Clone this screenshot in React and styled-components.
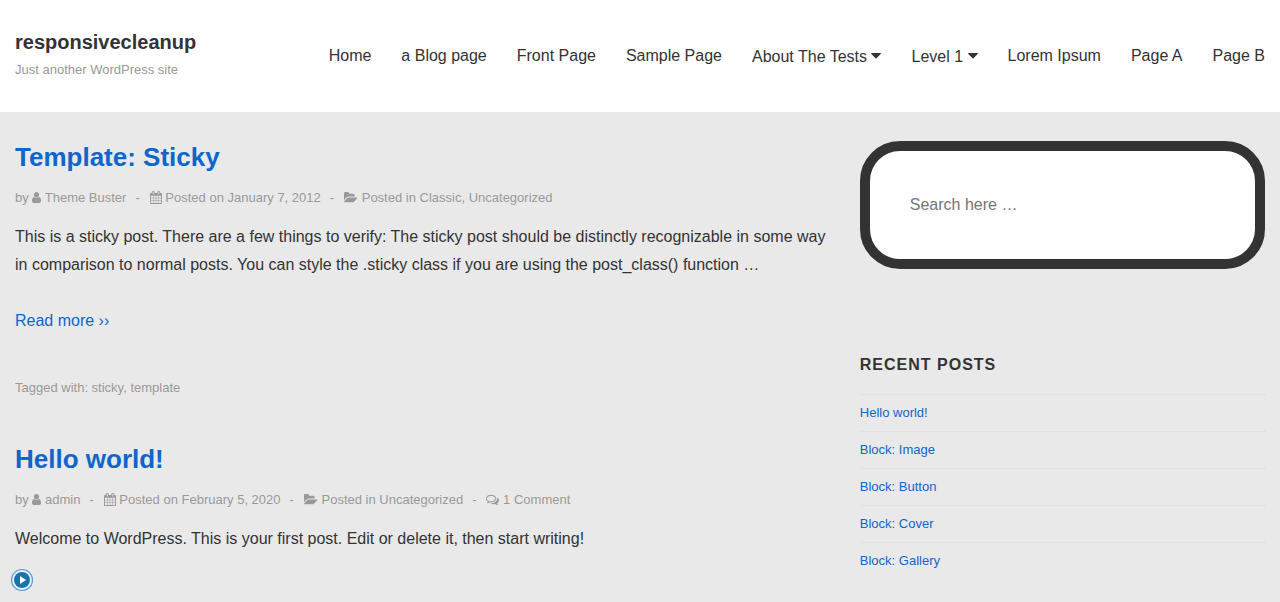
import React from 'react';
import styled, { createGlobalStyle } from 'styled-components';

const GlobalStyle = createGlobalStyle`
  *, *::before, *::after { box-sizing: border-box; }
  body {
    margin: 0;
    min-height: 100vh;
    background: #e9e9e9;
    color: #333;
    font: 16px/28px "Liberation Sans", Arial, sans-serif;
  }
  a { color: inherit; text-decoration: none; }
`;

const Header = styled.header`
  display: flex;
  justify-content: space-between;
  align-items: flex-start;
  padding: 28px 15px;
  min-height: 112px;
  background: #fff;
`;

const SiteTitle = styled.h1`
  margin: 0;
  font-size: 20px;
  line-height: 28px;
`;

const Tagline = styled.p`
  margin: 0;
  font-size: 13px;
  line-height: 28px;
  color: #999;
`;

const NavList = styled.ul`
  display: flex;
  gap: 30px;
  margin: 0;
  padding: 14px 0 0;
  list-style: none;
  white-space: nowrap;
`;

const NavItem = styled.li`
  padding-top: ${(p) => (p.$menu ? '1px' : '0')};
`;

const Glyph = styled.svg`
  height: ${(p) => p.$size}px;
  width: ${(p) => p.$width}px;
  vertical-align: -2px;
  fill: currentColor;
`;

const Columns = styled.div`
  display: grid;
  grid-template-columns: 66fr 34fr;
`;

const Posts = styled.main`
  padding: 27px 15px 0;
`;

const Post = styled.article`
  margin-bottom: 40px;
`;

const PostTitle = styled.h2`
  margin: 0 0 10px;
  font-size: 26px;
  line-height: 36px;
  color: #0e66cc;
`;

const Meta = styled.div`
  font-size: 13px;
  line-height: 26px;
  color: #999;
`;

const MetaItem = styled.span`
  & + &::before {
    content: "-";
    margin: 0 10px 0 9px;
  }
`;

const Text = styled.p`
  margin: 12px 0 28px;
`;

const ReadMore = styled.a`
  display: block;
  margin-bottom: 40px;
  color: #0e66cc;
`;

const Sidebar = styled.aside`
  padding: 29px 15px 0;
`;

const SearchInput = styled.input`
  display: block;
  width: 100%;
  height: 128px;
  padding: 40px;
  border: 10px solid #333;
  border-radius: 40px;
  background: #fff;
  color: #333;
  font: inherit;
  outline: none;
  &::placeholder { color: #757575; }
`;

const WidgetTitle = styled.h3`
  margin: 82px 0 15px;
  font-size: 16px;
  line-height: 28px;
  letter-spacing: 1px;
  text-transform: uppercase;
`;

const RecentList = styled.ul`
  margin: 0;
  padding: 0;
  list-style: none;
  font-size: 13px;
  line-height: 26px;
  color: #0e66cc;
`;

const RecentItem = styled.li`
  padding: 5px 0;
  border-top: 1px dotted #d8d8d8;
`;

const PlayButton = styled.button`
  position: fixed;
  left: 10px;
  bottom: 10px;
  width: 24px;
  height: 24px;
  padding: 0;
  border: 0;
  border-radius: 50%;
  background: none;
  svg { display: block; }
`;

const ICONS = {
  caret: {
    box: '0 0 1024 1792', w: 10,
    d: 'M1024 704q0 26-19 45l-448 448q-19 19-45 19t-45-19l-448-448q-19-19-19-45t19-45 45-19h896q26 0 45 19t19 45z',
  },
  user: {
    box: '256 0 1280 1792', w: 9,
    d: 'M1536 1399q0 109-62.5 187t-150.5 78h-854q-88 0-150.5-78t-62.5-187q0-85 8.5-160.5t31.5-152 58.5-131 94-89 134.5-34.5q131 128 313 128t313-128q76 0 134.5 34.5t94 89 58.5 131 31.5 152 8.5 160.5zm-256-887q0 159-112.5 271.5t-271.5 112.5-271.5-112.5-112.5-271.5 112.5-271.5 271.5-112.5 271.5 112.5 112.5 271.5z',
  },
  calendar: {
    box: '64 0 1664 1792', w: 12,
    d: 'M192 1664h288v-288h-288v288zm352 0h320v-288h-320v288zm-352-352h288v-320h-288v320zm352 0h320v-320h-320v320zm-352-384h288v-288h-288v288zm736 736h320v-288h-320v288zm-384-736h320v-288h-320v288zm768 736h288v-288h-288v288zm-384-352h320v-320h-320v320zm-352-864v-288q0-13-9.5-22.5t-22.5-9.5h-64q-13 0-22.5 9.5t-9.5 22.5v288q0 13 9.5 22.5t22.5 9.5h64q13 0 22.5-9.5t9.5-22.5zm736 864h288v-320h-288v320zm-384-384h320v-288h-320v288zm384 0h288v-288h-288v288zm32-480v-288q0-13-9.5-22.5t-22.5-9.5h-64q-13 0-22.5 9.5t-9.5 22.5v288q0 13 9.5 22.5t22.5 9.5h64q13 0 22.5-9.5t9.5-22.5zm384-64v1280q0 52-38 90t-90 38h-1408q-52 0-90-38t-38-90v-1280q0-52 38-90t90-38h128v-96q0-66 47-113t113-47h64q66 0 113 47t47 113v96h384v-96q0-66 47-113t113-47h64q66 0 113 47t47 113v96h128q52 0 90 38t38 90z',
  },
  folder: {
    box: '0 0 1920 1792', w: 14,
    d: 'M1815 952q0 31-31 66l-336 396q-43 51-120.5 86.5t-143.5 35.5h-1088q-34 0-60.5-13t-26.5-43q0-31 31-66l336-396q43-51 120.5-86.5t143.5-35.5h1088q34 0 60.5 13t26.5 43zm-343-344v160h-832q-94 0-197 47.5t-164 119.5l-337 396-5 6q0-4-.5-12.5t-.5-12.5v-960q0-92 66-158t158-66h320q92 0 158 66t66 158v32h544q92 0 158 66t66 158z',
  },
  comments: {
    box: '0 0 1792 1792', w: 13,
    d: 'M704 384q-153 0-286 52t-211.5 141-78.5 191q0 82 53 158t149 132l97 56-35 84q34-20 62-39l44-31 53 10q78 14 153 14 153 0 286-52t211.5-141 78.5-191-78.5-191-211.5-141-286-52zm0-128q191 0 353.5 68.5t256.5 186.5 94 257-94 257-256.5 186.5-353.5 68.5q-86 0-176-16-124 88-278 128-36 9-86 16h-3q-11 0-20.5-8t-11.5-21q-1-3-1-6.5t.5-6.5 2-6l2.5-5 3.5-5.5 4-5 4.5-5 4-4.5q5-6 23-25t26-29.5 22.5-29 25-38.5 20.5-44q-124-72-195-177t-71-224q0-139 94-257t256.5-186.5 353.5-68.5zm822 1169q10 24 20.5 44t25 38.5 22.5 29 26 29.5 23 25q1 1 4 4.5t4.5 5 4 5 3.5 5.5l2.5 5 2 6 .5 6.5-1 6.5q-3 14-13 22t-22 7q-50-7-86-16-154-40-278-128-90 16-176 16-271 0-472-132 58 4 88 4 161 0 309-45t264-129q125-92 192-212t67-254q0-77-23-152 129 71 204 178t75 230q0 120-71 224.5t-195 176.5z',
  },
};

function Icon({ name, size = 13 }) {
  const { box, w, d } = ICONS[name];
  return (
    <Glyph viewBox={box} $size={size} $width={w} aria-hidden="true">
      <path d={d} />
    </Glyph>
  );
}

const NAV = [
  { label: 'Home' },
  { label: 'a Blog page' },
  { label: 'Front Page' },
  { label: 'Sample Page' },
  { label: 'About The Tests', menu: true },
  { label: 'Level 1', menu: true },
  { label: 'Lorem Ipsum' },
  { label: 'Page A' },
  { label: 'Page B' },
];

const RECENT = ['Hello world!', 'Block: Image', 'Block: Button', 'Block: Cover', 'Block: Gallery'];

export default function App() {
  return (
    <>
      <GlobalStyle />
      <Header>
        <div>
          <SiteTitle><a href="#home">responsivecleanup</a></SiteTitle>
          <Tagline>Just another WordPress site</Tagline>
        </div>
        <nav aria-label="Main">
          <NavList>
            {NAV.map(({ label, menu }) => (
              <NavItem key={label} $menu={menu}>
                <a href="#page">
                  {label}
                  {menu && <> <Icon name="caret" size={17} /></>}
                </a>
              </NavItem>
            ))}
          </NavList>
        </nav>
      </Header>
      <Columns>
        <Posts>
          <Post>
            <PostTitle><a href="#sticky">Template: Sticky</a></PostTitle>
            <Meta>
              <MetaItem>by <Icon name="user" /> <a href="#author">Theme Buster</a></MetaItem>
              <MetaItem><Icon name="calendar" /> Posted on <a href="#date">January 7, 2012</a></MetaItem>
              <MetaItem>
                <Icon name="folder" /> Posted in <a href="#classic">Classic</a>, <a href="#uncategorized">Uncategorized</a>
              </MetaItem>
            </Meta>
            <Text>
              This is a sticky post. There are a few things to verify: The sticky post should be distinctly
              recognizable in some way in comparison to normal posts. You can style the .sticky class if you
              are using the post_class() function …
            </Text>
            <ReadMore href="#sticky">Read more ››</ReadMore>
            <Meta>Tagged with: <a href="#tag-sticky">sticky</a>, <a href="#tag-template">template</a></Meta>
          </Post>
          <Post>
            <PostTitle><a href="#hello">Hello world!</a></PostTitle>
            <Meta>
              <MetaItem>by <Icon name="user" /> <a href="#author">admin</a></MetaItem>
              <MetaItem><Icon name="calendar" /> Posted on <a href="#date">February 5, 2020</a></MetaItem>
              <MetaItem><Icon name="folder" /> Posted in <a href="#uncategorized">Uncategorized</a></MetaItem>
              <MetaItem><Icon name="comments" /> <a href="#comments">1 Comment</a></MetaItem>
            </Meta>
            <Text>Welcome to WordPress. This is your first post. Edit or delete it, then start writing!</Text>
          </Post>
        </Posts>
        <Sidebar>
          <form role="search">
            <SearchInput type="search" aria-label="Search" placeholder="Search here …" />
          </form>
          <WidgetTitle>Recent Posts</WidgetTitle>
          <RecentList>
            {RECENT.map((title) => (
              <RecentItem key={title}><a href="#post">{title}</a></RecentItem>
            ))}
          </RecentList>
        </Sidebar>
      </Columns>
      <PlayButton type="button" aria-label="Play">
        <svg width="24" height="24" viewBox="0 0 24 24" aria-hidden="true">
          <circle cx="12" cy="12" r="10.5" fill="#f0f1f2" stroke="#5b9dd9" strokeWidth="1.2" />
          <circle cx="12" cy="12" r="8" fill="#1a74ab" />
          <path d="M10 8l6 4-6 4z" fill="#fff" />
        </svg>
      </PlayButton>
    </>
  );
}
